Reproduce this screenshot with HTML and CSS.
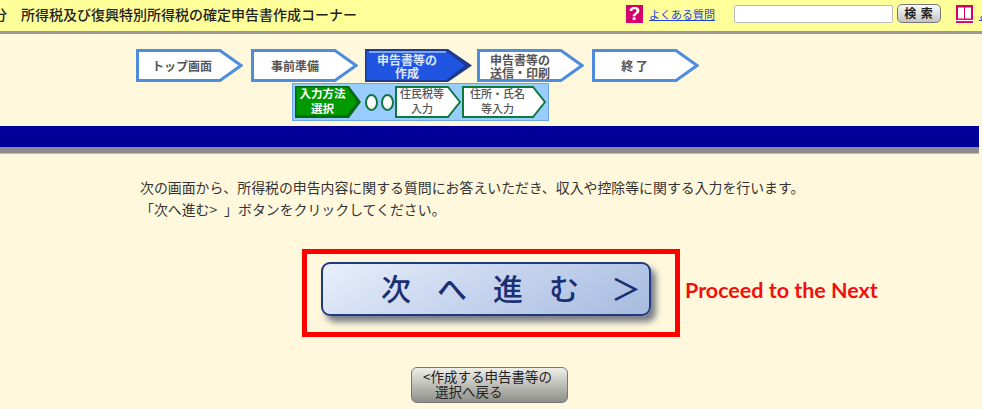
FILE: index.html
```html
<!DOCTYPE html>
<html lang="ja">
<head>
<meta charset="utf-8">
<title>確定申告書作成コーナー</title>
<link rel="stylesheet" href="styles.css">
</head>
<body>
<header class="top">
  <h1 class="title"><span class="clip">分</span>所得税及び復興特別所得税の確定申告書作成コーナー</h1>
  <span class="badge">?</span>
  <a class="link" href="#">よくある質問</a>
  <input class="search" type="text" aria-label="検索">
  <button class="search-btn" type="button">検 索</button>
  <svg class="book" viewBox="0 0 17 18" aria-hidden="true">
    <rect width="17" height="18" fill="#d6006b"/>
    <path d="M2 2.500h6v11H2zM9 2.500h6v11H9z" fill="#fff"/>
    <path d="M0 15.500h17" stroke="#fff" stroke-width="1.200"/>
  </svg>
  <a class="link link-end" href="#">よ</a>
</header>

<nav class="steps">
  <div class="step step-top">
    <svg class="shape" viewBox="0 0 107 33" aria-hidden="true"><polygon class="s-blue" points="1.500,1.500 84,1.500 105,16.500 84,31.500 1.500,31.500"/></svg>
    <span class="label">トップ画面</span>
  </div>
  <div class="step step-prep">
    <svg class="shape" viewBox="0 0 107 33" aria-hidden="true"><polygon class="s-blue" points="1.500,1.500 84,1.500 105,16.500 84,31.500 1.500,31.500"/></svg>
    <span class="label">事前準備</span>
  </div>
  <div class="step step-active">
    <svg class="shape" viewBox="0 0 107 33" aria-hidden="true">
      <polygon fill="#1d3a8f" points="0,0 83,0 107,16.500 83,33 0,33"/>
      <polygon fill="#1f55e0" points="1.500,2 81,2 100,16.500 81,31 1.500,31"/>
      <rect x="4" y="2" width="77" height="2" fill="#7ea6f0"/>
    </svg>
    <span class="label">申告書等の<br>作成</span>
  </div>
  <div class="step step-send">
    <svg class="shape" viewBox="0 0 107 33" aria-hidden="true"><polygon class="s-blue" points="1.500,1.500 84,1.500 105,16.500 84,31.500 1.500,31.500"/></svg>
    <span class="label">申告書等の<br>送信・印刷</span>
  </div>
  <div class="step step-end">
    <svg class="shape" viewBox="0 0 107 33" aria-hidden="true"><polygon class="s-blue" points="1.500,1.500 84,1.500 105,16.500 84,31.500 1.500,31.500"/></svg>
    <span class="label">終 了</span>
  </div>
</nav>

<div class="subs">
  <div class="sub sub-first">
    <svg class="shape" viewBox="0 0 66 32" aria-hidden="true">
      <polygon fill="#006b12" points="0,0 54,0 66,16 54,32 0,32"/>
      <polygon fill="#009900" points="1.500,1.500 52,1.500 62,16 52,29 1.500,29"/>
    </svg>
    <span class="sub-label">入力方法<br>選択</span>
  </div>
  <span class="oval"></span>
  <span class="oval oval-last"></span>
  <div class="sub sub-second">
    <svg class="shape" viewBox="0 0 66 32" aria-hidden="true"><polygon class="s-green" points="1,1 53,1 65,16 53,31 1,31"/></svg>
    <span class="sub-label sub-dark">住民税等<br>入力</span>
  </div>
  <div class="sub sub-third">
    <svg class="shape" viewBox="0 0 84 32" aria-hidden="true"><polygon class="s-green" points="1,1 71,1 83,16 71,31 1,31"/></svg>
    <span class="sub-label sub-dark">住所・氏名<br>等入力</span>
  </div>
</div>

<div class="band"></div>

<main class="content">
  <p class="lead">次の画面から、所得税の申告内容に関する質問にお答えいただき、収入や控除等に関する入力を行います。<br>「次へ進む&gt;&ensp;」ボタンをクリックしてください。</p>
  <div class="next-row">
    <div class="highlight">
      <button class="next" type="button"><span>次</span><span>へ</span><span>進</span><span>む</span><span class="next-arrow">＞</span></button>
    </div>
    <span class="note">Proceed to the Next</span>
  </div>
  <button class="back" type="button">&lt;作成する申告書等の<br><span class="back-second">選択へ戻る</span></button>
</main>
</body>
</html>
```

FILE: styles.css
```css
* { box-sizing: border-box; }

html, body {
  margin: 0;
  height: 409px;
  overflow: hidden;
}

body {
  background: #fff8dc;
  color: #333;
  font-family: "Noto Sans CJK JP", "Liberation Sans", sans-serif;
}

.top {
  display: flex;
  align-items: center;
  height: 34px;
  padding-bottom: 3px;
  background: #ffff99;
  border-bottom: 3px solid #999;
  overflow: hidden;
  white-space: nowrap;
}

.title {
  margin: 0 0 0 -7px;
  width: 633px;
  flex: none;
  font-size: 14px;
  font-weight: 500;
  color: #222;
}

.clip { margin-right: 14px; }

.badge {
  flex: none;
  width: 17px;
  height: 18px;
  background: #d6006b;
  color: #fff;
  font: bold 19px/18px "Liberation Sans", sans-serif;
  text-align: center;
}

.link {
  flex: none;
  margin-left: 6px;
  color: #2244dd;
  font-size: 11px;
  line-height: 14px;
}

.search {
  flex: none;
  width: 159px;
  height: 18px;
  margin: 0 0 0 19px;
  background: #fff;
  border: 1px solid #bbb;
  border-radius: 2px;
}

.search-btn {
  flex: none;
  width: 44px;
  height: 19px;
  margin: -2px 0 0 4px;
  padding: 0;
  background: linear-gradient(#fafafa, #c4c4c4);
  border: 1px solid #777;
  border-radius: 5px;
  color: #222;
  font: 700 12px/16px "Noto Sans CJK JP", sans-serif;
  letter-spacing: 1px;
}

.book {
  flex: none;
  width: 17px;
  height: 18px;
  margin-left: 15px;
}

.link-end { margin-left: 6px; }

.steps {
  display: flex;
  height: 33px;
  margin: 15px 0 0 136px;
}

.step {
  position: relative;
  flex: none;
  width: 107px;
  height: 33px;
  margin-right: 7.500px;
}

.step-active { margin-right: 5px; }

.shape {
  position: absolute;
  inset: 0;
  width: 100%;
  height: 100%;
}

.s-blue {
  fill: #fff;
  stroke: #4d8ddb;
  stroke-width: 3;
}

.s-green {
  fill: #fff;
  stroke: #0b7a3c;
  stroke-width: 2;
}

.label {
  position: absolute;
  left: 0;
  top: 0;
  display: flex;
  align-items: center;
  justify-content: center;
  height: 33px;
  width: 93px;
  color: #555;
  font-size: 12px;
  font-weight: 700;
  line-height: 13px;
  text-align: center;
}

.step-top .label { width: 92px; }
.step-prep .label { width: 89px; }

.step-active .label {
  color: #dbe6ff;
  width: 84px;
}

.step-send .label,
.step-end .label { width: 86px; }

.subs {
  display: flex;
  align-items: center;
  width: 257px;
  height: 38px;
  margin: 1px 0 0 292px;
  padding-left: 2px;
  background: #99ccff;
  border: 1px solid #6aa6ee;
}

.sub {
  position: relative;
  flex: none;
  height: 32px;
}

.sub-first { width: 66px; margin-right: 4px; }
.sub-second { width: 66px; margin-right: 1px; }
.sub-third { width: 84px; }

.sub-label {
  position: absolute;
  left: 0;
  top: 0;
  width: 55px;
  height: 30px;
  color: #fff;
  font-size: 11.500px;
  font-weight: 700;
  line-height: 15px;
  text-align: center;
}

.sub-dark {
  color: #555;
  font-size: 11px;
  font-weight: 500;
  width: 54px;
}

.sub-third .sub-label { width: 71px; }

.oval {
  flex: none;
  width: 13px;
  height: 17px;
  margin-right: 3px;
  background: #fff;
  border: 2px solid #0b7a3c;
  border-radius: 50%;
}

.oval-last { margin-right: 1px; }

.band {
  width: 979px;
  height: 21px;
  margin-top: 5px;
  background: #000099;
  box-shadow: 0 6px 0 #8c8c8c, 0 7px 0 #bdbdb0;
}

.content { padding-top: 29px; }

.lead {
  margin: 0 0 0 140px;
  font-size: 13.900px;
  line-height: 22px;
  color: #333;
  white-space: nowrap;
}

.next-row {
  display: flex;
  align-items: center;
  margin: 29px 0 0 302px;
}

.highlight {
  flex: none;
  width: 378px;
  height: 88px;
  padding: 8px 0 0 14px;
  border: 5px solid #ff0000;
}

.next {
  display: block;
  width: 330px;
  height: 54px;
  padding: 0 0 4px 58px;
  background: linear-gradient(150deg, #e9effb 0%, #c9d6ef 45%, #a6bbdf 100%);
  border: 2px solid #1f3a7d;
  border-radius: 9px;
  box-shadow: 5px 6px 6px rgba(50, 60, 90, 0.650);
  color: #1b2f73;
  font-family: "Noto Sans CJK JP", sans-serif;
  font-size: 30px;
  font-weight: 500;
  line-height: 46px;
  white-space: nowrap;
  text-align: left;
}

.next span {
  display: inline-block;
  width: 56px;
}

.next .next-arrow {
  width: 30px;
  margin-left: 6px;
}

.note {
  flex: none;
  margin: -6px 0 0 5px;
  color: #f01010;
  font: 700 21.500px/24px Lato, "Liberation Sans", sans-serif;
}

.back {
  display: block;
  width: 157px;
  height: 36px;
  margin: 30px 0 0 411px;
  padding: 0 0 2px 11px;
  background: linear-gradient(#efefe8, #8e8e8a);
  border: 1px solid #777;
  border-radius: 6px;
  color: #222;
  font-family: "Noto Sans CJK JP", sans-serif;
  font-size: 13.500px;
  line-height: 15px;
  text-align: left;
  white-space: nowrap;
}

.back-second { margin-left: 12px; }
```
